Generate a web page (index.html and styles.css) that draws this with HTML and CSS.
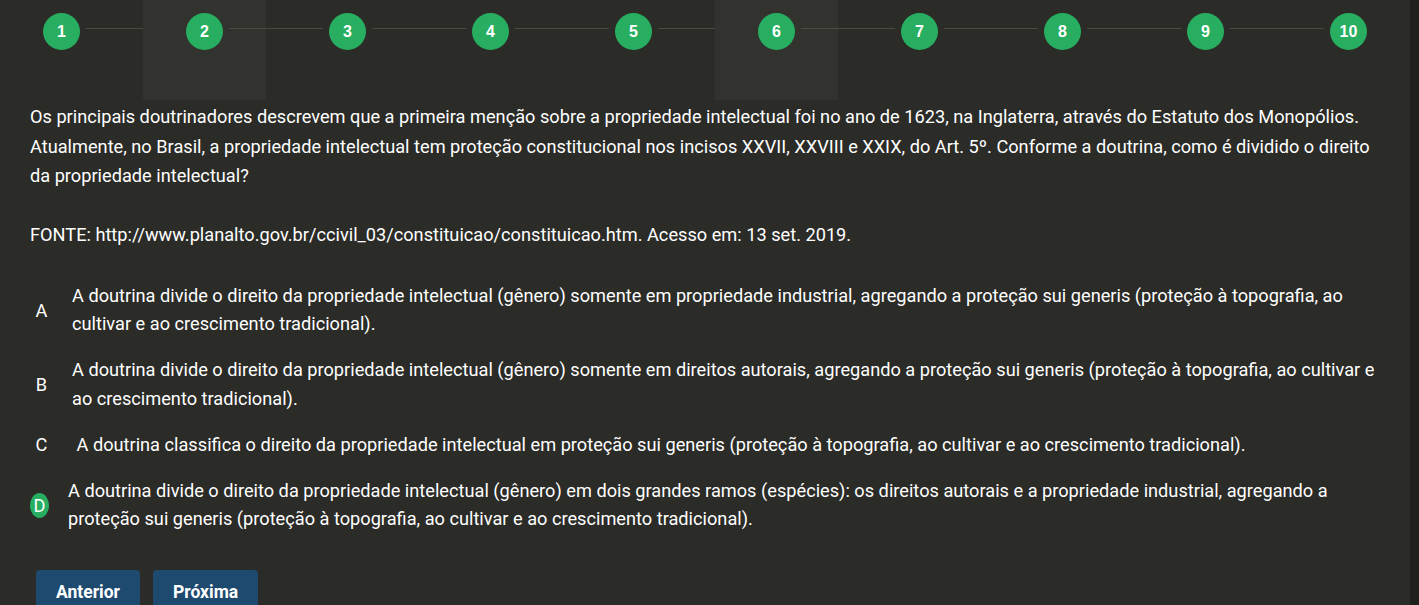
FILE: index.html
```html
<!DOCTYPE html>
<html lang="pt-BR">
<head>
<meta charset="utf-8">
<title>Questionário</title>
<link rel="stylesheet" href="styles.css">
</head>
<body>
<div class="page">
  <main class="main">
    <nav class="stepper">
      <div class="step"><span class="dot">1</span></div>
      <div class="step step-hl"><span class="dot">2</span></div>
      <div class="step"><span class="dot">3</span></div>
      <div class="step"><span class="dot">4</span></div>
      <div class="step"><span class="dot">5</span></div>
      <div class="step step-hl"><span class="dot">6</span></div>
      <div class="step"><span class="dot">7</span></div>
      <div class="step"><span class="dot">8</span></div>
      <div class="step"><span class="dot">9</span></div>
      <div class="step step-last"><span class="dot">10</span></div>
    </nav>
    <section class="content">
      <p class="question">Os principais doutrinadores descrevem que a primeira menção sobre a propriedade intelectual foi no ano de 1623, na Inglaterra, através do Estatuto dos Monopólios. Atualmente, no Brasil, a propriedade intelectual tem proteção constitucional nos incisos XXVII, XXVIII e XXIX, do Art. 5º. Conforme a doutrina, como é dividido o direito da propriedade intelectual?</p>
      <p class="source">FONTE: http://www.planalto.gov.br/ccivil_03/constituicao/constituicao.htm. Acesso em: 13 set. 2019.</p>
      <ul class="options">
        <li class="option"><span class="opt-letter">A</span><span class="opt-text">A doutrina divide o direito da propriedade intelectual (gênero) somente em propriedade industrial, agregando a proteção sui generis (proteção à topografia, ao cultivar e ao crescimento tradicional).</span></li>
        <li class="option"><span class="opt-letter">B</span><span class="opt-text">A doutrina divide o direito da propriedade intelectual (gênero) somente em direitos autorais, agregando a proteção sui generis (proteção à topografia, ao cultivar e ao crescimento tradicional).</span></li>
        <li class="option"><span class="opt-letter">C</span><span class="opt-text">&nbsp;A doutrina classifica o direito da propriedade intelectual em proteção sui generis (proteção à topografia, ao cultivar e ao crescimento tradicional).</span></li>
        <li class="option option-selected"><span class="opt-letter">D</span><span class="opt-text">A doutrina divide o direito da propriedade intelectual (gênero) em dois grandes ramos (espécies): os direitos autorais e a propriedade industrial, agregando a proteção sui generis (proteção à topografia, ao cultivar e ao crescimento tradicional).</span></li>
      </ul>
      <div class="actions">
        <button class="btn" type="button">Anterior</button>
        <button class="btn" type="button">Próxima</button>
      </div>
    </section>
  </main>
  <div class="scroll-strip"></div>
</div>
</body>
</html>
```

FILE: styles.css
```css
* { box-sizing: border-box; }

html, body {
  margin: 0;
  padding: 0;
  height: 100%;
  overflow: hidden;
}

body {
  background: #2b2b27;
  color: #ffffff;
  font-family: Roboto, "Liberation Sans", sans-serif;
}

.page {
  display: flex;
  min-height: 100%;
}

.main {
  flex: 1;
  min-width: 0;
}

.scroll-strip {
  width: 9px;
  flex-shrink: 0;
  background: #1f1f1d;
}

/* stepper */
.stepper {
  display: flex;
  gap: 20px;
  height: 100px;
}

.step {
  position: relative;
  width: 123px;
  flex-shrink: 0;
  display: flex;
  justify-content: center;
  padding-top: 13px;
}

.step-hl {
  background: #32322e;
}

.step::after {
  content: "";
  position: absolute;
  top: 28px;
  left: calc(50% + 24.5px);
  width: calc(100% + 20px - 49px);
  height: 1px;
  background: #4a4a45;
}

.step-last::after {
  display: none;
}

.dot {
  width: 37px;
  height: 37px;
  border-radius: 50%;
  background: #27ae60;
  color: #ffffff;
  font-family: "Liberation Sans", Arial, sans-serif;
  font-weight: 700;
  font-size: 16px;
  display: flex;
  align-items: center;
  justify-content: center;
}

/* content */
.content {
  padding: 0 24px 0 30px;
  font-size: 18.2px;
}

.question {
  margin: 2px 0 0;
  line-height: 29.5px;
}

.source {
  margin: 29.5px 0 0;
  line-height: 29.5px;
}

.options {
  list-style: none;
  margin: 32px 0 0;
  padding: 0;
  display: flex;
  flex-direction: column;
  gap: 17.5px;
}

.option {
  display: flex;
  align-items: center;
}

.opt-letter {
  width: 23px;
  flex-shrink: 0;
  text-align: center;
  line-height: 25px;
}

.opt-text {
  margin-left: 19px;
  line-height: 28.5px;
}

.option-selected .opt-letter {
  width: 19px;
  height: 25px;
  border-radius: 50%;
  background: #27ae60;
}

/* actions */
.actions {
  display: flex;
  gap: 13px;
  margin-top: 36px;
  padding-left: 6px;
}

.btn {
  height: 44px;
  padding: 0 20px;
  border: none;
  border-radius: 4px;
  background: #1f4a70;
  color: #ffffff;
  font-family: Roboto, "Liberation Sans", sans-serif;
  font-weight: 700;
  font-size: 17.5px;
  cursor: pointer;
}
```
